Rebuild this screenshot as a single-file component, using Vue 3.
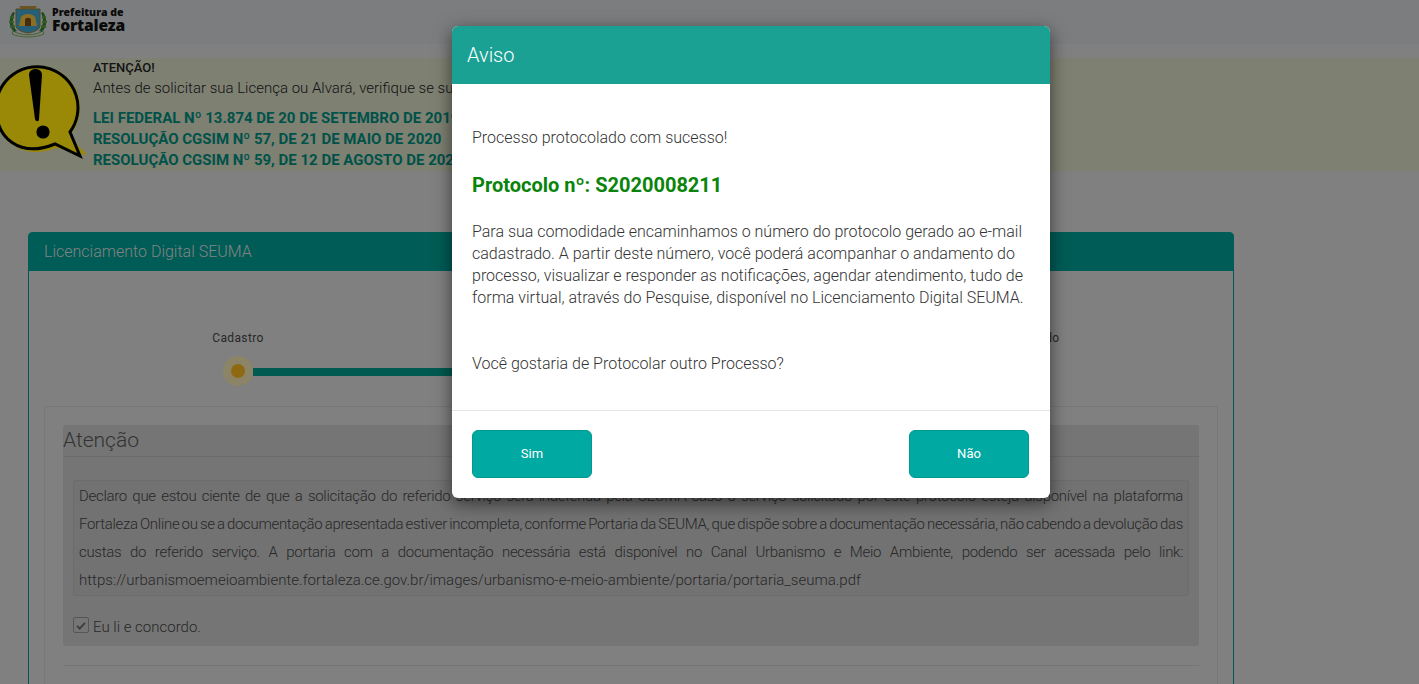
<script setup>
const laws = [
  'LEI FEDERAL Nº 13.874 DE 20 DE SETEMBRO DE 2019',
  'RESOLUÇÃO CGSIM Nº 57, DE 21 DE MAIO DE 2020',
  'RESOLUÇÃO CGSIM Nº 59, DE 12 DE AGOSTO DE 2020'
]
const termLines = [
  'Declaro que estou ciente de que a solicitação do referido serviço será indeferida pela SEUMA caso o serviço solicitado por este protocolo esteja disponível na plataforma',
  'Fortaleza Online ou se a documentação apresentada estiver incompleta, conforme Portaria da SEUMA, que dispõe sobre a documentação necessária, não cabendo a devolução das',
  'custas do referido serviço. A portaria com a documentação necessária está disponível no Canal Urbanismo e Meio Ambiente, podendo ser acessada pelo link:'
]
</script>

<template>
  <div class="page">
    <header class="top">
      <svg class="crest" viewBox="0 0 42 36" width="42" height="36" aria-hidden="true">
        <path d="M6 10c-4 5-5 14 1 20l3-1C5 24 5 16 8 11z" fill="#2f7d32" />
        <path d="M36 10c4 5 5 14-1 20l-3-1c5-5 5-13 2-18z" fill="#2f7d32" />
        <path d="M3 15l4 1M2 20l5 0M3 25l5-1M39 15l-4 1M40 20l-5 0M39 25l-5-1" stroke="#5c9e3c" stroke-width="2" />
        <path d="M9 7h24v16c0 5-6 7-12 8-6-1-12-3-12-8z" fill="#3e9fc9" stroke="#8a7a2a" stroke-width="1" />
        <path d="M12 24l2-9c3-4 11-4 14 0l2 9z" fill="#e8b93a" />
        <path d="M18 24v-6c0-3 6-3 6 0v6z" fill="#7a4a1a" />
        <path d="M12 4h18l-2 3H14z" fill="#b58a3a" />
        <path d="M6 29c8 5 22 5 30 0l1 3c-9 4-23 4-32 0z" fill="#d8d4b8" stroke="#2f7d32" stroke-width=".6" />
      </svg>
      <div class="brand">
        <span class="brand-small">Prefeitura de</span>
        <span class="brand-big">Fortaleza</span>
      </div>
    </header>

    <section class="notice">
      <svg class="warn" viewBox="0 1 93 113" width="93" height="113" aria-hidden="true">
        <path d="M-4 50a42 42 0 1 1 73 29l18 19-31-7C22 104-4 84-4 50z" fill="#ffe40a" />
        <path d="M-4 50a41 41 0 1 1 74 25l10 24-25-12C20 101-4 82-4 50z" fill="none" stroke="#000" stroke-width="3" stroke-linejoin="miter" />
        <path d="M29 18c0-8 13-8 13 0l-3 44c0 3-3 3-4 0z" fill="#000" />
        <circle cx="43" cy="75" r="6.6" fill="#000" />
      </svg>
      <div class="notice-text">
        <div class="notice-title">ATENÇÃO!</div>
        <div class="notice-lead">Antes de solicitar sua Licença ou Alvará, verifique se sua atividade é considerada de baixo risco, conforme:</div>
        <div class="laws">
          <a v-for="law in laws" :key="law" class="law">{{ law }}</a>
        </div>
      </div>
    </section>

    <section class="card">
      <div class="card-head">Licenciamento Digital SEUMA</div>
      <div class="card-body">
        <div class="stepper">
          <div class="step">
            <span class="step-label">Cadastro</span>
            <span class="dot"><i></i></span>
          </div>
          <div class="bar"></div>
          <div class="step">
            <span class="step-label">Protocolado</span>
            <span class="dot dot-end"></span>
          </div>
        </div>

        <div class="box">
          <div class="panel">
            <h3 class="panel-title">Atenção</h3>
            <div class="terms">
              <span v-for="line in termLines" :key="line" class="term-line">{{ line }}</span>
              <span class="term-url">https://urbanismoemeioambiente.fortaleza.ce.gov.br/images/urbanismo-e-meio-ambiente/portaria/portaria_seuma.pdf</span>
            </div>
            <label class="agree">
              <span class="check">
                <svg viewBox="0 0 16 16" width="15" height="15" aria-hidden="true">
                  <path d="M3.5 8.5l3 3L12.5 5" fill="none" stroke="#666" stroke-width="2.2" />
                </svg>
              </span>
              <span>Eu li e concordo.</span>
            </label>
          </div>
          <hr class="rule" />
        </div>
      </div>
    </section>

    <div class="backdrop"></div>

    <div class="modal">
      <div class="modal-head">Aviso</div>
      <div class="modal-body">
        <p>Processo protocolado com sucesso!</p>
        <p class="protocol">Protocolo nº: S2020008211</p>
        <p>Para sua comodidade encaminhamos o número do protocolo gerado ao e-mail cadastrado. A partir deste número, você poderá acompanhar o andamento do processo, visualizar e responder as notificações, agendar atendimento, tudo de forma virtual, através do Pesquise, disponível no Licenciamento Digital SEUMA.</p>
        <p class="ask">Você gostaria de Protocolar outro Processo?</p>
      </div>
      <div class="modal-foot">
        <button class="btn" type="button">Sim</button>
        <button class="btn" type="button">Não</button>
      </div>
    </div>
  </div>
</template>

<style>
html, body {
  margin: 0;
  height: 100%;
  overflow: hidden;
  background: #d5d5d5;
}
</style>

<style scoped>
.page {
  position: relative;
  height: 684px;
  overflow: hidden;
  background: #d5d5d5;
  font-family: Roboto, "Liberation Sans", sans-serif;
  color: #333;
}

.top {
  height: 44px;
  background: #cfd1d4;
  display: flex;
  align-items: flex-start;
  padding: 2px 0 0 7px;
  box-sizing: border-box;
  gap: 3px;
}
.brand { display: flex; flex-direction: column; margin-top: 5px; color: #111; }
.brand-small { font: 800 10.5px/11px "Open Sans", sans-serif; }
.brand-big { font: 800 15.6px/15px "Open Sans", sans-serif; letter-spacing: -.2px; }

.notice {
  margin-top: 14px;
  height: 113px;
  background: #d3d5bf;
  display: flex;
}
.warn { flex: none; overflow: hidden; }
.notice-text { padding-top: 2px; }
.notice-title { font-size: 13px; font-weight: 500; line-height: 15px; color: #222; }
.notice-lead { font-size: 15px; font-weight: 300; line-height: 20px; margin-top: 3px; color: #222; }
.laws { display: flex; flex-direction: column; margin-top: 10px; }
.law { font-size: 15px; font-weight: 700; line-height: 21px; color: #00897b; }

.card {
  margin: 61px 0 0 28px;
  width: 1206px;
  box-sizing: border-box;
  border: 1px solid #009688;
  border-top: 0;
  border-radius: 5px 5px 0 0;
  background: #d5d5d5;
}
.card-head {
  margin: 0 -1px;
  height: 39px;
  padding-left: 16px;
  background: #009a90;
  border-radius: 5px 5px 0 0;
  color: #d9d9d9;
  font-size: 16px;
  font-weight: 300;
  line-height: 39px;
}
.card-body { padding: 0 15px; }

.stepper {
  height: 135px;
  display: flex;
  align-items: flex-start;
  padding: 58px 133px 0 134px;
  box-sizing: border-box;
  position: relative;
}
.step { width: 120px; flex: none; display: flex; flex-direction: column; align-items: center; }
.step-label { font-size: 12px; line-height: 18px; color: #444; letter-spacing: .35px; }
.dot {
  margin-top: 9px;
  width: 30px; height: 30px;
  border-radius: 50%;
  background: #e9dcaa;
  display: flex; align-items: center; justify-content: center;
}
.dot i { width: 14px; height: 14px; border-radius: 50%; background: #eeb01f; }
.bar {
  flex: 1;
  height: 8px;
  margin: 39px -45px 0;
  background: #009688;
}
.dot-end { background: #009688; }

.box {
  border: 1px solid #c6c6c6;
  border-radius: 3px;
  padding: 18px 18px 300px;
}
.panel {
  background: #c3c3c3;
  border-radius: 3px;
  height: 221px;
  padding: 0 10px;
}
.panel-title {
  margin: 0 -10px;
  padding: 0;
  height: 31px;
  border-bottom: 1px solid #b5b5b5;
  font-size: 21px;
  font-weight: 300;
  line-height: 30px;
  color: #555;
}
.terms {
  margin-top: 23px;
  height: 116px;
  box-sizing: border-box;
  border: 1px solid #b4b4b4;
  border-radius: 3px;
  background: #bebebe;
  padding: 1px 5px;
  font-size: 15px;
  font-weight: 300;
  line-height: 28px;
  color: #444;
}
.term-line {
  display: block;
  text-align: justify;
  text-align-last: justify;
  white-space: normal;
  letter-spacing: -.3px;
  word-spacing: -1.5px;
}
.term-url { display: block; }
.agree {
  display: flex;
  align-items: flex-start;
  gap: 4px;
  margin-top: 21px;
  font-size: 15px;
  font-weight: 300;
  line-height: 20px;
  color: #444;
}
.check {
  width: 14px; height: 14px;
  border: 1px solid #8f8f8f;
  border-radius: 2px;
  display: flex; align-items: center; justify-content: center;
}
.rule {
  margin: 19px 0 0;
  border: 0;
  border-top: 1px solid #c4c4c4;
}

.backdrop {
  position: absolute;
  inset: 0;
  background: rgba(0, 0, 0, .4);
}

.modal {
  position: absolute;
  left: 452px;
  top: 26px;
  width: 598px;
  height: 472px;
  background: #fff;
  border-radius: 6px;
  box-shadow: 0 5px 18px rgba(0, 0, 0, .55);
  display: flex;
  flex-direction: column;
  overflow: hidden;
}
.modal-head {
  height: 58px;
  flex: none;
  background: #1ba094;
  color: #fff;
  font-size: 20px;
  line-height: 58px;
  font-weight: 300;
  padding-left: 15px;
}
.modal-body {
  flex: 1;
  padding: 43px 20px 0;
  color: #333;
  font-size: 16px;
  font-weight: 300;
  line-height: 22px;
  letter-spacing: 0;
}
.modal-body p { margin: 0; }
.modal-body .protocol {
  margin: 25px 0 25px;
  font-size: 20px;
  font-weight: 700;
  color: #0a840a;
}
.modal-body .ask { margin-top: 44px; }
.modal-foot {
  flex: none;
  height: 88px;
  box-sizing: border-box;
  border-top: 1px solid #e5e5e5;
  padding: 19px 21px 0 20px;
  display: flex;
  justify-content: space-between;
  align-items: flex-start;
}
.btn {
  width: 120px;
  height: 48px;
  border: 1px solid #009a92;
  border-radius: 6px;
  background: #00a9a1;
  color: #fff;
  font-family: inherit;
  font-size: 13px;
  font-weight: 400;
  padding: 0 0 2px;
}
</style>
